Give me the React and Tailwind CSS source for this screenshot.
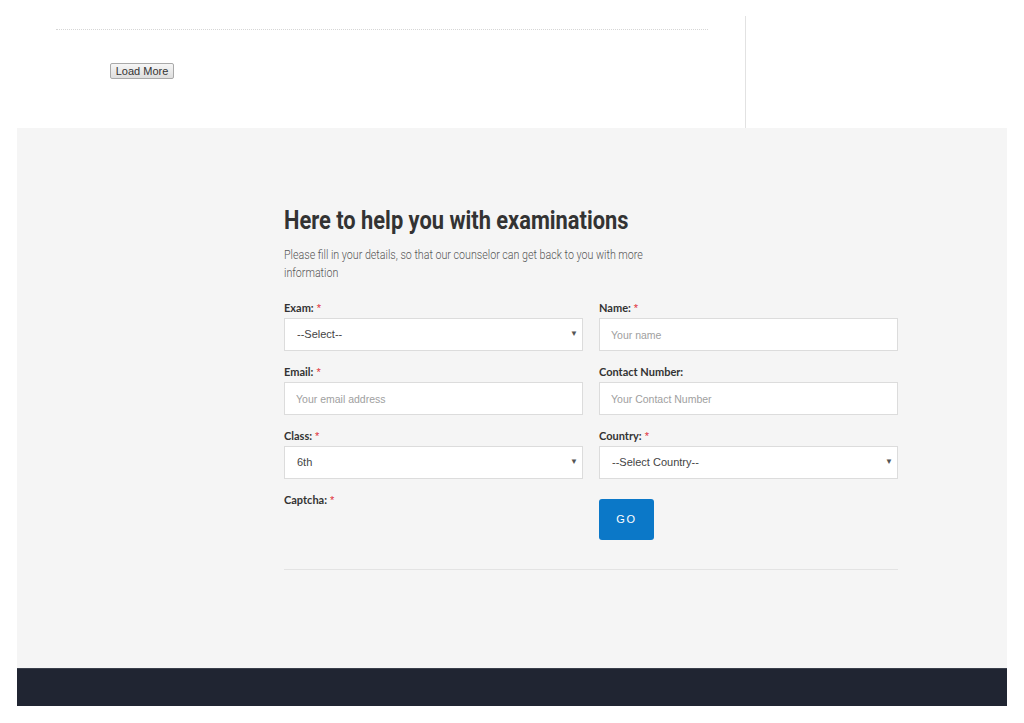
import React from 'react'

const Label = ({ text, required }) => (
  <div className="text-[11px] leading-[16px] mb-[2px] font-bold text-[#333]">
    <span className="font-['Lato','Liberation_Sans',sans-serif]">{text}</span>
    {required && <span className="ml-[3px] text-[#e0303a] font-normal">*</span>}
  </div>
)

const TextField = ({ placeholder }) => (
  <input
    type="text"
    readOnly
    placeholder={placeholder}
    className="block w-full h-[33px] border border-[#dcdcdc] bg-white px-[11px] text-[10.5px] font-['Liberation_Sans',Arial,sans-serif] text-[#333] placeholder:text-[#a0a0a0] outline-none"
  />
)

const SelectField = ({ value }) => (
  <div className="relative">
    <select
      defaultValue={value}
      className="appearance-none block w-full h-[33px] border border-[#dcdcdc] bg-white pl-[12px] pr-6 text-[11px] font-['Liberation_Sans',Arial,sans-serif] text-[#444] outline-none"
    >
      <option>{value}</option>
    </select>
    <span className="pointer-events-none absolute right-[5px] top-[10px] text-[8px] text-[#555]">▼</span>
  </div>
)

const Field = ({ label, required, children }) => (
  <div className="mb-[13px]">
    <Label text={label} required={required} />
    {children}
  </div>
)

export default function App() {
  return (
    <div className="w-[1024px] min-h-[723px] bg-white font-['Liberation_Sans',Arial,sans-serif]">
      {/* top strip */}
      <div className="flex h-[128px] mx-[17px]">
        <div className="w-[728px] pl-[39px] pr-[20px] pt-[29px]">
          <div className="border-t border-dotted border-[#d6d6d6] w-[652px]" />
          <div className="pl-[54px] pt-[28px]">
            <button className="h-[16px] w-[64px] border border-[#a9a9a9] rounded-[2px] bg-gradient-to-b from-[#f6f6f6] to-[#dedede] text-[11px] leading-[14px] text-[#333]">
              Load More
            </button>
          </div>
        </div>
        <div className="flex-1 mt-[16px] border-l border-[#e2e2e2]" />
      </div>

      {/* enquiry section */}
      <div className="mx-[17px] h-[540px] bg-[#f5f5f5]">
        <div className="ml-[267px] w-[614px] pt-[77px]">
          <h2 className="font-['Roboto',sans-serif] font-bold text-[26px] leading-[30px] text-[#333] whitespace-nowrap">
            <span className="inline-block origin-left scale-x-[0.84]">Here to help you with examinations</span>
          </h2>
          <p className="mt-[11px] font-['Roboto',sans-serif] font-light text-[12.5px] leading-[18px] text-[#555] whitespace-nowrap">
            <span className="inline-block origin-left scale-x-[0.855]">
              Please fill in your details, so that our counselor can get back to you with more
              <br />
              information
            </span>
          </p>

          <div className="mt-[18px] grid grid-cols-2 gap-x-[16px]">
            <Field label="Exam:" required>
              <SelectField value="--Select--" />
            </Field>
            <Field label="Name:" required>
              <TextField placeholder="Your name" />
            </Field>
            <Field label="Email:" required>
              <TextField placeholder="Your email address" />
            </Field>
            <Field label="Contact Number:">
              <TextField placeholder="Your Contact Number" />
            </Field>
            <Field label="Class:" required>
              <SelectField value="6th" />
            </Field>
            <Field label="Country:" required>
              <SelectField value="--Select Country--" />
            </Field>
            <div>
              <Label text="Captcha:" required />
            </div>
            <div className="pt-[7px]">
              <button className="h-[41px] w-[55px] rounded-[3px] bg-[#0b78c8] text-white text-[11px] tracking-[0.15em] font-['Liberation_Sans',Arial,sans-serif]">
                GO
              </button>
            </div>
          </div>

          <div className="mt-[29px] border-t border-[#e3e3e3]" />
        </div>
      </div>

      {/* footer */}
      <div className="mx-[17px] h-[38px] bg-[#202532] border-t border-[#3a3f4b]" />
    </div>
  )
}
